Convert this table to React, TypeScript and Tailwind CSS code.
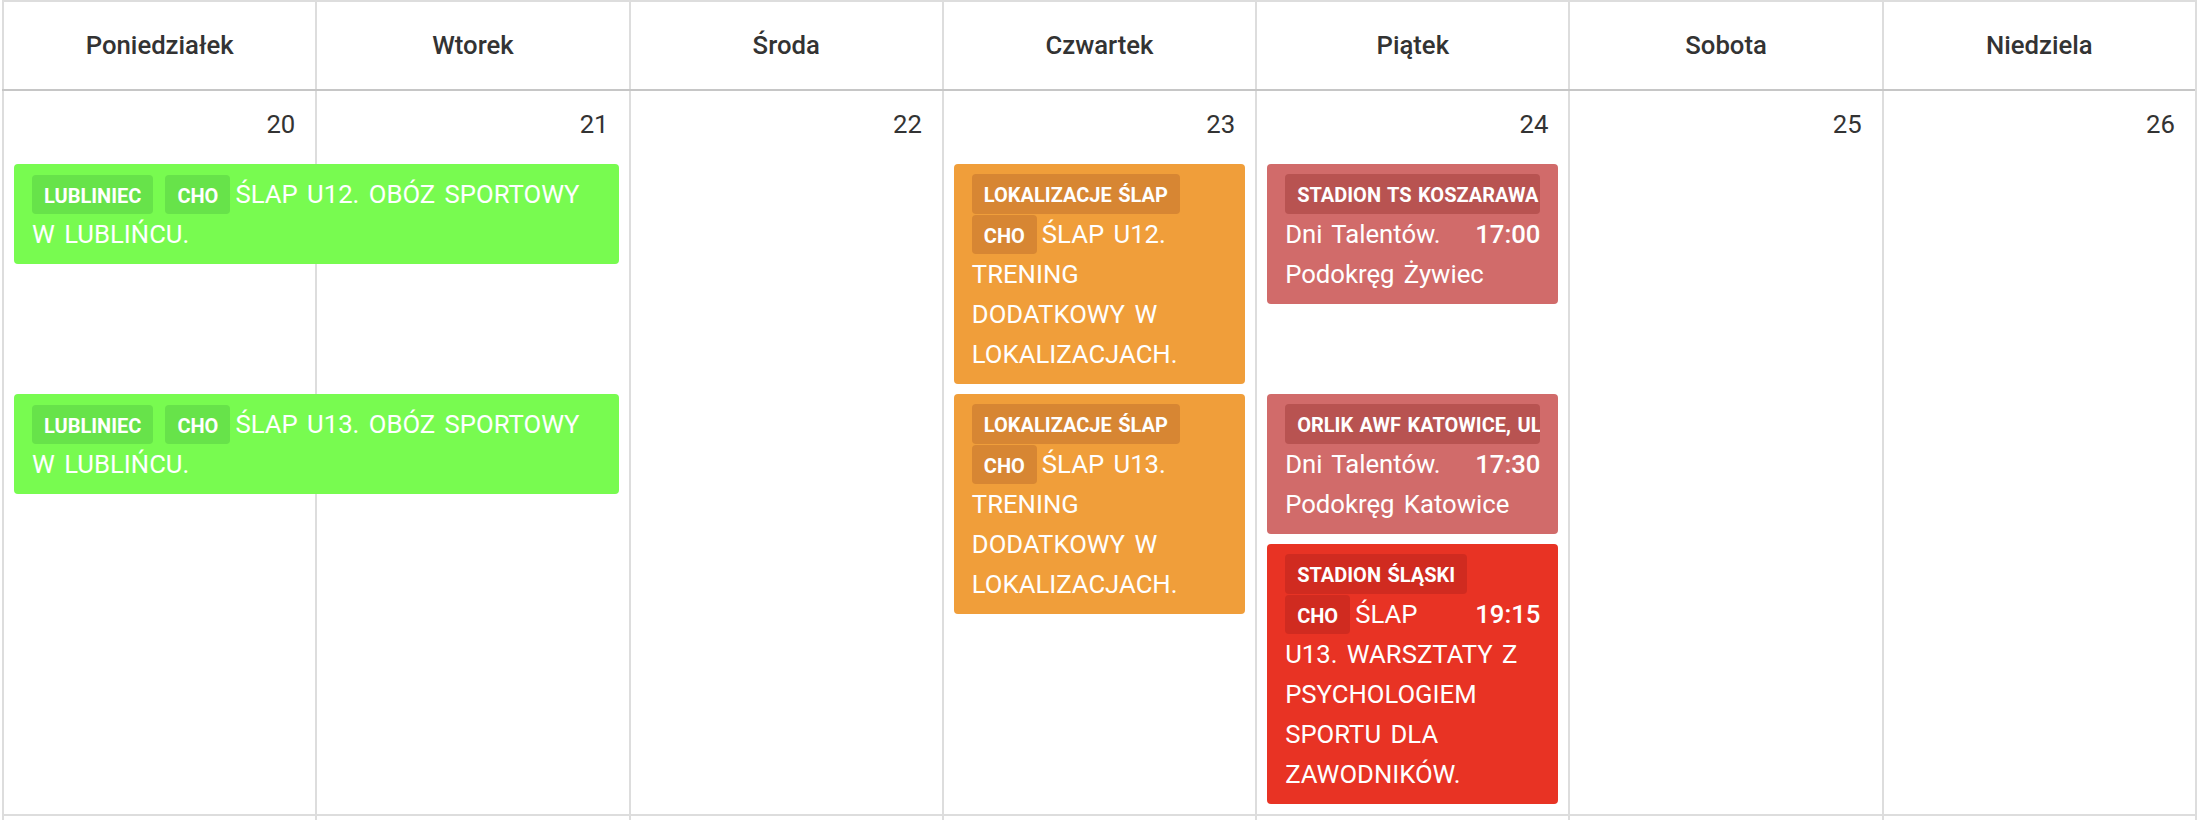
const days = ["Poniedziałek", "Wtorek", "Środa", "Czwartek", "Piątek", "Sobota", "Niedziela"];

const cells = [
  { date: 20, col: "col-start-1" },
  { date: 21, col: "col-start-2" },
  { date: 22, col: "col-start-3" },
  { date: 23, col: "col-start-4" },
  { date: 24, col: "col-start-5" },
  { date: 25, col: "col-start-6" },
  { date: 26, col: "col-start-7" },
];

const colors = {
  green: { bg: "bg-[#78fb50]", badge: "bg-[#67e34a]" },
  orange: { bg: "bg-[#f09e3a]", badge: "bg-[#d78633]" },
  pink: { bg: "bg-[#d16b6a]", badge: "bg-[#b85351]" },
  red: { bg: "bg-[#e83324]", badge: "bg-[#d02b20]" },
};

type Color = keyof typeof colors;

function Badge({ color, children, className = "" }: { color: Color; children: React.ReactNode; className?: string }) {
  return (
    <span
      className={`inline-block rounded-[4px] px-[12px] pt-[11px] pb-[8px] text-[20px] font-bold leading-[20px] [word-spacing:1.5px] ${colors[color].badge} ${className}`}
    >
      {children}
    </span>
  );
}

// lokalizacja w osobnej linii, ucięta do szerokości wydarzenia
function PlaceBadge({ color, children }: { color: Color; children: React.ReactNode }) {
  return (
    <div>
      <span
        className={`inline-block max-w-full overflow-hidden whitespace-nowrap rounded-[4px] px-[12px] pt-[11px] pb-[9px] align-top text-[20px] font-bold leading-[20px] [word-spacing:1.5px] ${colors[color].badge}`}
      >
        {children}
      </span>
    </div>
  );
}

function Event({ color, className = "", children }: { color: Color; className?: string; children: React.ReactNode }) {
  return (
    <div
      className={`rounded-[4px] px-[18px] py-[10px] text-[25.7px] leading-[40px] text-white [word-spacing:3px] ${colors[color].bg} ${className}`}
    >
      {children}
    </div>
  );
}

function Time({ children }: { children: React.ReactNode }) {
  return <span className="float-right ml-[12px] font-medium">{children}</span>;
}

export default function App() {
  return (
    <div className="min-h-screen bg-white font-['Roboto',sans-serif] text-[#333]">
      <div className="ml-[2px] w-[2195px] border-t-2 border-r-2 border-[#ddd]">
        {/* Nagłówek z dniami */}
        <div className="grid grid-cols-7 border-b-2 border-[#c6c6c6]">
          {days.map((day) => (
            <div
              key={day}
              className="flex h-[87px] items-center justify-center border-l-2 border-[#ddd] text-[25.7px] font-medium"
            >
              {day}
            </div>
          ))}
        </div>

        {/* Tydzień */}
        <div className="grid grid-cols-7 grid-rows-[73px_auto_auto] border-b-2 border-[#ddd]">
          {cells.map((c) => (
            <div
              key={c.date}
              className={`${c.col} row-span-full border-l-2 border-[#ddd] pt-[13px] pr-[20px] text-right text-[25.7px] leading-[40px]`}
            >
              {c.date}
            </div>
          ))}

          <Event color="green" className="col-span-2 col-start-1 row-start-2 mr-[10px] mb-[10px] ml-[12px] self-start">
            <Badge color="green" className="mr-[12px]">LUBLINIEC</Badge>
            <Badge color="green" className="mr-[5px]">CHO</Badge>
            ŚLAP U12. OBÓZ SPORTOWY W LUBLIŃCU.
          </Event>

          <Event color="orange" className="col-start-4 row-start-2 mr-[10px] mb-[10px] ml-[12px] self-start">
            <PlaceBadge color="orange">LOKALIZACJE ŚLAP</PlaceBadge>
            <div>
              <Badge color="orange" className="mr-[5px]">CHO</Badge>
              ŚLAP U12. TRENING DODATKOWY W LOKALIZACJACH.
            </div>
          </Event>

          <Event color="pink" className="col-start-5 row-start-2 mr-[10px] mb-[10px] ml-[12px] self-start">
            <PlaceBadge color="pink">STADION TS KOSZARAWA</PlaceBadge>
            <div>
              <Time>17:00</Time>
              Dni Talentów. Podokręg Żywiec
            </div>
          </Event>

          <Event color="green" className="col-span-2 col-start-1 row-start-3 mr-[10px] mb-[10px] ml-[12px] self-start">
            <Badge color="green" className="mr-[12px]">LUBLINIEC</Badge>
            <Badge color="green" className="mr-[5px]">CHO</Badge>
            ŚLAP U13. OBÓZ SPORTOWY W LUBLIŃCU.
          </Event>

          <Event color="orange" className="col-start-4 row-start-3 mr-[10px] mb-[10px] ml-[12px] self-start">
            <PlaceBadge color="orange">LOKALIZACJE ŚLAP</PlaceBadge>
            <div>
              <Badge color="orange" className="mr-[5px]">CHO</Badge>
              ŚLAP U13. TRENING DODATKOWY W LOKALIZACJACH.
            </div>
          </Event>

          <div className="col-start-5 row-start-3 mr-[10px] mb-[10px] ml-[12px] flex flex-col gap-[10px] self-start">
            <Event color="pink">
              <PlaceBadge color="pink">ORLIK AWF KATOWICE, UL. MIKOŁOWSKA 72A</PlaceBadge>
              <div>
                <Time>17:30</Time>
                Dni Talentów. Podokręg Katowice
              </div>
            </Event>
            <Event color="red">
              <PlaceBadge color="red">STADION ŚLĄSKI</PlaceBadge>
              <div>
                <Time>19:15</Time>
                <Badge color="red" className="mr-[5px]">CHO</Badge>
                ŚLAP U13. WARSZTATY Z PSYCHOLOGIEM SPORTU DLA ZAWODNIKÓW.
              </div>
            </Event>
          </div>
        </div>

        {/* Następny tydzień (początek) */}
        <div className="grid grid-cols-7">
          {cells.map((c) => (
            <div key={c.date} className="h-[100px] border-l-2 border-[#ddd]" />
          ))}
        </div>
      </div>
    </div>
  );
}
